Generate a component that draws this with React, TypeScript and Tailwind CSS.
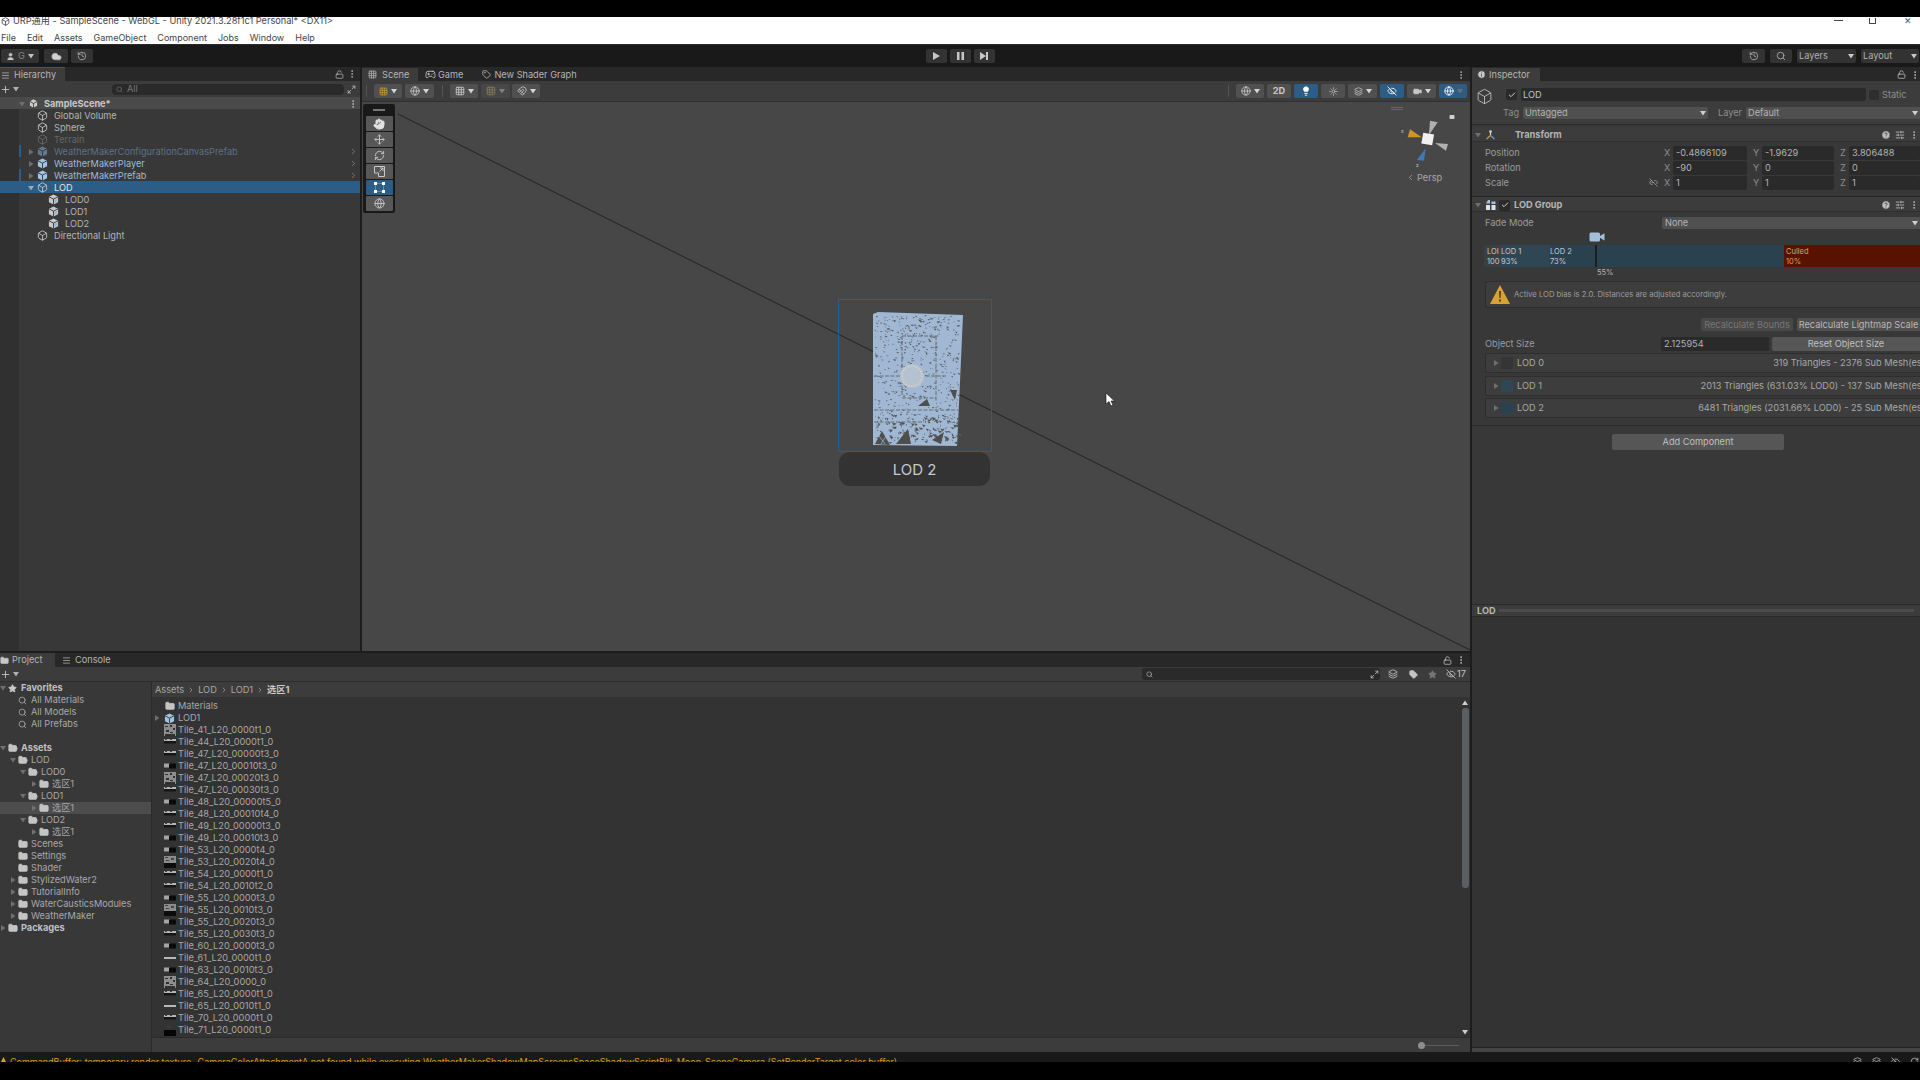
import type { ReactNode } from 'react';
import {
  Box, ChevronRight, CircleHelp, Cloud, EyeOff, Folder, FolderOpen, Globe, Grid3x3, Hand, History,
  Info, LockOpen, Maximize2, Menu, MoreVertical, Move, Plus, RefreshCw, Search, SlidersHorizontal, Star, Tag,
  Gamepad2, User, Link2Off, Check, Lightbulb, Video, Sun, Layers, Magnet,
} from 'lucide-react';

function Tri({ down = false, className = 'text-[#6f6f6f]' }: { down?: boolean; className?: string }) {
  return (
    <svg width="6" height="6" viewBox="0 0 6 6" className={`shrink-0 ${className}`}>
      <path d={down ? 'M0 1h6L3 5.5z' : 'M1 0l4.5 3L1 6z'} fill="currentColor" />
    </svg>
  );
}

function ToolBtn({ className = '', children }: { className?: string; children: ReactNode }) {
  return <div className={`h-[14px] flex items-center justify-center gap-[3px] rounded-[2px] ${className}`}>{children}</div>;
}

function PrefabIcon({ dim = false }: { dim?: boolean }) {
  return (
    <svg width="11" height="11" viewBox="0 0 12 12" className="shrink-0">
      <path d="M6 .5l5 2.5v6L6 11.5 1 9V3z" fill={dim ? '#64788a' : '#9fc4e6'} />
      <path d="M6 5.6v5.9M1 3l5 2.6L11 3" stroke="#333" strokeWidth="1" fill="none" />
    </svg>
  );
}

function MeshPrefabIcon() {
  return (
    <svg width="11" height="11" viewBox="0 0 12 12" className="shrink-0">
      <path d="M6 .5l5 2.5v6L6 11.5 1 9V3z" fill="#c9c9c9" />
      <path d="M6 5.6v5.9M1 3l5 2.6L11 3" stroke="#333" strokeWidth="1" fill="none" />
      <path d="M7 6.5l3-1.5v3L7 9.5z" fill="#8fb6da" />
    </svg>
  );
}

function TransformIcon() {
  return (
    <svg width="11" height="10" viewBox="0 0 11 10" className="ml-[4px] shrink-0">
      <path d="M5.500 5.500V1" stroke="#d8d8d8" strokeWidth="1.200" />
      <path d="M5.500 5.500L1.500 9" stroke="#d39a2e" strokeWidth="1.200" />
      <path d="M5.500 5.500L9.500 9" stroke="#6f9fd0" strokeWidth="1.200" />
      <circle cx="5.500" cy="1.500" r="1.300" fill="#d8d8d8" />
    </svg>
  );
}

function LodGroupIcon() {
  return (
    <svg width="10" height="10" viewBox="0 0 10 10" className="ml-[5px] shrink-0">
      <path d="M0 3.500L2 0h2v3.500zM5.500 1.500h4v2.500h-4z" fill="#a9c2dc" />
      <path d="M0 5h4v5H0zM5.500 5h4v5h-4z" fill="#dce4ec" />
    </svg>
  );
}

const hierarchyRows = [
  { name: 'Global Volume', pad: 'pl-[29px]', icon: 'go', text: 'text-[#b4b4b4]' },
  { name: 'Sphere', pad: 'pl-[29px]', icon: 'go', text: 'text-[#b4b4b4]' },
  { name: 'Terrain', pad: 'pl-[29px]', icon: 'off', text: 'text-[#666666]' },
  { name: 'WeatherMakerConfigurationCanvasPrefab', pad: 'pl-[29px]', icon: 'dimPrefab', text: 'text-[#5c7186]', arrow: true, more: true, mark: true },
  { name: 'WeatherMakerPlayer', pad: 'pl-[29px]', icon: 'prefab', text: 'text-[#9dbbd8]', arrow: true, more: true },
  { name: 'WeatherMakerPrefab', pad: 'pl-[29px]', icon: 'prefab', text: 'text-[#9dbbd8]', arrow: true, more: true, mark: true },
  { name: 'LOD', pad: 'pl-[29px]', icon: 'go', text: 'text-[#e4e4e4]', open: true, selected: true },
  { name: 'LOD0', pad: 'pl-[40px]', icon: 'mesh', text: 'text-[#b4b4b4]' },
  { name: 'LOD1', pad: 'pl-[40px]', icon: 'mesh', text: 'text-[#b4b4b4]' },
  { name: 'LOD2', pad: 'pl-[40px]', icon: 'mesh', text: 'text-[#b4b4b4]' },
  { name: 'Directional Light', pad: 'pl-[29px]', icon: 'go', text: 'text-[#b4b4b4]' },
];

function Hierarchy() {
  return (
    <div className="w-[360px] shrink-0 flex flex-col bg-[#383838]">
      <div className="h-[14px] bg-[#282828] flex items-center">
        <div className="w-[65px] h-full bg-[#3c3c3c] border-t border-[#2c5d87] flex items-center gap-1 pl-px pt-px text-[#b4b4b4]">
          <Menu size={9} />
          <span>Hierarchy</span>
        </div>
        <div className="ml-auto flex items-center gap-[3px] pr-[3px] text-[#b4b4b4]">
          <LockOpen size={9} />
          <MoreVertical size={10} />
        </div>
      </div>
      <div className="h-[16px] bg-[#3c3c3c] flex items-center text-[#c4c4c4]">
        <Plus size={11} />
        <Tri down className="text-[#b0b0b0] ml-[2px]" />
        <div className="ml-[93px] w-[232px] h-[11px] bg-[#2a2a2a] rounded-sm flex items-center gap-1 pl-1 text-[#777777]">
          <Search size={7} />
          <span>All</span>
        </div>
        <Maximize2 size={9} className="ml-[3px]" />
      </div>
      <div className="relative flex-1 flex flex-col">
        <div className="absolute left-0 top-0 bottom-0 w-[19px] bg-[#303030]" />
        <div className="relative h-3 bg-[#4a4a4a] flex items-center pl-[19px] pt-px font-bold text-[#c8c8c8]">
          <span className="w-[9px]"><Tri down /></span>
          <span className="w-3"><Box size={11} fill="#cccccc" className="text-[#444444]" /></span>
          <span className="ml-1">SampleScene*</span>
          <MoreVertical size={10} className="ml-auto mr-[2px] text-[#c4c4c4]" />
        </div>
        {hierarchyRows.map((r) => (
          <div key={r.name} className={`relative h-3 flex items-center pt-px ${r.pad} ${r.selected ? 'bg-[#2c5d87]' : ''}`}>
            {r.mark && <div className="absolute left-[19px] top-0 h-3 w-[2px] bg-[#2c5d87]" />}
            <span className="w-[9px] -ml-[1px]">{r.arrow && <Tri />}{r.open && <Tri down className="text-[#9aa9b5]" />}</span>
            <span className="w-3">
              {r.icon === 'go' && <Box size={11} className="text-[#c0c0c0]" />}
              {r.icon === 'off' && <Box size={11} className="text-[#666666]" />}
              {r.icon === 'prefab' && <PrefabIcon />}
              {r.icon === 'dimPrefab' && <PrefabIcon dim />}
              {r.icon === 'mesh' && <MeshPrefabIcon />}
            </span>
            <span className={`ml-[5px] ${r.text}`}>{r.name}</span>
            {r.more && <ChevronRight size={9} className="ml-auto mr-[2px] text-[#8a8a8a]" />}
          </div>
        ))}
      </div>
    </div>
  );
}

function buildSpecks() {
  let seed = 1337;
  const rnd = () => {
    seed = (seed * 16807) % 2147483647;
    return seed / 2147483647;
  };
  let d = '';
  for (let i = 0; i < 620; i++) {
    const zone = rnd();
    const bottom = zone < 0.28;
    const top = zone > 0.28 && zone < 0.5;
    const x = 2 + rnd() * 84;
    const y = bottom ? 104 + rnd() * 28 : top ? 5 + rnd() * 20 : 25 + rnd() * 80;
    const w = 0.8 + rnd() * (bottom ? 4 : 2.6);
    const h = 0.5 + rnd() * (bottom ? 2 : 0.9);
    d += `M${x.toFixed(1)} ${y.toFixed(1)}l${w.toFixed(1)} ${(h * 0.4).toFixed(1)}l${(-w * 0.5).toFixed(1)} ${h.toFixed(1)}z`;
  }
  return d;
}

const meshSpecks = buildSpecks();

function LodMesh() {
  return (
    <svg width="92" height="136" viewBox="0 0 92 136" className="absolute left-[510px] top-[208px]">
      <path d="M1 4l5-2 85 3-3 67-3 64L1 135z" fill="#a0b8d4" />
      <path d={meshSpecks} fill="#565656" />
      <path d="M30 26v60M30 26h36M64 26v66M30 88h34M48 66h26M2 66h26M2 100h84M2 112h50" stroke="#5f6468" strokeWidth="0.9" fill="none" strokeDasharray="4 1.5" />
      <path d="M3 134l7-13 8 14zM24 134l12-15 3 15zM60 130l12-8-3 12zM78 80l7 0-2 10zM46 96l9-7 3 7z" fill="#4e4e4e" />
      <path d="M4 122l9 12M18 120l-9 14" stroke="#a0b8d4" strokeWidth="0.7" />
      <circle cx="40" cy="66" r="12" fill="#b4c2d0" />
      <circle cx="40" cy="66" r="10" fill="none" stroke="#d0cec8" strokeWidth="2" strokeDasharray="1.5 1.5" />
    </svg>
  );
}

function Gizmo() {
  return (
    <svg width="64" height="72" viewBox="0 0 64 72" className="absolute left-[1043px] top-[8px] overflow-visible">
      <path d="M24 25l1-14.300 7.700 1.600z" fill="#b0b0b0" />
      <path d="M30 33l13 1-2 6.700z" fill="#b0b0b0" />
      <path d="M2.700 27.300L5 19.300l11.700 8z" fill="#cf9427" />
      <path d="M11.700 50l9-11.700L19 50.700z" fill="#3f78b4" />
      <rect x="17.200" y="23.500" width="11" height="11" transform="rotate(10 22.700 29)" fill="#f0f0f0" />
      <rect x="44.500" y="5" width="5" height="4" rx="1" fill="#d0d0d0" />
      <text x="-4" y="23" fontSize="5" fill="#cccccc">x</text>
      <text x="11" y="57" fontSize="5" fill="#cccccc">z</text>
    </svg>
  );
}

function ScaleToolIcon() {
  return (
    <svg width="11" height="11" viewBox="0 0 11 11" fill="none" stroke="#c8c8c8" strokeWidth="1">
      <path d="M.5.5h10v10H4.500V7H.5zM5.500 5.500L9 2M6 2h3v3" />
    </svg>
  );
}

function RectToolIcon() {
  return (
    <svg width="11" height="11" viewBox="0 0 11 11">
      <path d="M1.500 1.500h8v8h-8z" fill="none" stroke="#cfe0f0" strokeWidth="0.7" strokeDasharray="1 1" />
      <path d="M0 0h3v3H0zM8 0h3v3H8zM0 8h3v3H0zM8 8h3v3H8z" fill="#ffffff" />
    </svg>
  );
}

function SceneTools() {
  const tools = [
    <Hand key="hand" size={12} fill="#e2e2e2" className="text-[#e2e2e2]" />,
    <Move key="move" size={11} />,
    <RefreshCw key="rot" size={11} />,
    <ScaleToolIcon key="scale" />,
    <RectToolIcon key="rect" />,
    <Globe key="all" size={11} />,
  ];
  return (
    <div className="absolute left-[1px] top-[2px] w-[32px] h-[109px] bg-[#191919] rounded-[2px] flex flex-col items-center">
      <div className="h-[12px] flex items-center"><div className="w-3 h-[2px] border-y border-[#777777]" /></div>
      {tools.map((t, i) => (
        <div key={i} className={`w-[27px] h-[15px] mb-px flex items-center justify-center rounded-[1px] ${i === 4 ? 'bg-[#2c5d87] text-white' : 'bg-[#575757] text-[#c8c8c8]'}`}>
          {t}
        </div>
      ))}
    </div>
  );
}

function SceneView() {
  return (
    <div className="flex-1 flex flex-col min-w-0">
      <div className="h-[14px] bg-[#282828] flex items-center pt-px text-[#b4b4b4]">
        <div className="w-[56px] h-full bg-[#3c3c3c] flex items-center gap-[5px] pl-[6px]">
          <Grid3x3 size={9} />
          <span>Scene</span>
        </div>
        <Gamepad2 size={11} className="ml-[7px] text-[#c4c4c4]" />
        <span className="ml-[2px]">Game</span>
        <Tag size={9} className="ml-[19px] text-[#c4c4c4]" />
        <span className="ml-[3px]">New Shader Graph</span>
        <MoreVertical size={10} className="ml-auto mr-[4px]" />
      </div>
      <div className="h-[20px] bg-[#3c3c3c] flex items-center text-[#c8c8c8]">
        <div className="ml-[4px] w-px h-3 bg-[#555555]" />
        <ToolBtn className="ml-[7px] w-[28px] bg-[#505050]"><Grid3x3 size={9} className="text-[#c99a4b]" /><Tri down className="text-[#d4d4d4]" /></ToolBtn>
        <ToolBtn className="ml-[3px] w-[29px] bg-[#505050]"><Globe size={10} /><Tri down className="text-[#d4d4d4]" /></ToolBtn>
        <div className="ml-[8px] w-px h-3 bg-[#555555]" />
        <ToolBtn className="ml-[7px] w-[28px] bg-[#505050]"><Grid3x3 size={10} /><Tri down className="text-[#d4d4d4]" /></ToolBtn>
        <ToolBtn className="ml-[3px] w-[29px] bg-[#474747]"><Grid3x3 size={10} className="text-[#8a7a5a]" /><Tri down className="text-[#808080]" /></ToolBtn>
        <ToolBtn className="ml-[2px] w-[28px] bg-[#505050]"><Magnet size={10} /><Tri down className="text-[#d4d4d4]" /></ToolBtn>
        <div className="ml-auto flex items-center gap-[3px] pr-[3px]">
          <div className="w-px h-3 bg-[#555555] mr-[4px]" />
          <ToolBtn className="w-[28px] bg-[#505050]"><Globe size={10} /><Tri down className="text-[#d4d4d4]" /></ToolBtn>
          <ToolBtn className="w-[24px] bg-[#505050] font-bold">2D</ToolBtn>
          <ToolBtn className="w-[24px] bg-[#2c5d87]"><Lightbulb size={10} fill="#ffffff" className="text-white" /></ToolBtn>
          <ToolBtn className="w-[24px] bg-[#505050]"><Sun size={9} /></ToolBtn>
          <ToolBtn className="w-[29px] bg-[#505050]"><Layers size={9} /><Tri down className="text-[#d4d4d4]" /></ToolBtn>
          <ToolBtn className="w-[24px] bg-[#2c5d87] text-white"><EyeOff size={10} /></ToolBtn>
          <ToolBtn className="w-[29px] bg-[#505050]"><Video size={9} fill="#c8c8c8" /><Tri down className="text-[#d4d4d4]" /></ToolBtn>
          <ToolBtn className="w-[28px] bg-[#2c5d87] text-white"><Globe size={10} /><Tri down /></ToolBtn>
        </div>
      </div>
      <div className="relative flex-1 bg-[#474747] overflow-hidden border-t border-[#303030]">
        <svg className="absolute inset-0 w-full h-full">
          <line x1="36" y1="12" x2="1108" y2="548" stroke="#222222" strokeWidth="1" />
        </svg>
        <SceneTools />
        <div className="absolute left-[476px] top-[197px] w-[154px] h-[153px] border border-[#2c5d87]" />
        <LodMesh />
        <div className="absolute left-[477px] top-[350px] w-[151px] h-[34px] rounded-[11px] bg-[#333333] flex items-center justify-center text-[15px] text-[#c8c8c8]">LOD 2</div>
        <svg width="10" height="14" viewBox="0 0 10 14" className="absolute left-[743px] top-[291px]">
          <path d="M1 0v11l3-2.500 2 4.500 2-1-2-4h3.500z" fill="#ffffff" stroke="#111111" strokeWidth="0.6" />
        </svg>
        <Gizmo />
        <div className="absolute left-[1044px] top-[71px] flex items-center gap-[2px] text-[#a8a8a8]">
          <ChevronRight size={9} className="rotate-180" />
          <span>Persp</span>
        </div>
        <div className="absolute left-[1029px] top-[5px] w-3 h-[3px] border-y border-[#666666]" />
      </div>
    </div>
  );
}

const treeRows = [
  { name: 'All Materials', pad: 'pl-[10px]', icon: 'search' },
  { name: 'All Models', pad: 'pl-[10px]', icon: 'search' },
  { name: 'All Prefabs', pad: 'pl-[10px]', icon: 'search' },
  { name: '', pad: '', icon: '' },
  { name: 'Assets', pad: 'pl-0', icon: 'open', arrow: 'down', bold: true },
  { name: 'LOD', pad: 'pl-[10px]', icon: 'open', arrow: 'down' },
  { name: 'LOD0', pad: 'pl-[20px]', icon: 'open', arrow: 'down' },
  { name: '选区1', pad: 'pl-[31px]', icon: 'folder', arrow: 'right' },
  { name: 'LOD1', pad: 'pl-[20px]', icon: 'open', arrow: 'down' },
  { name: '选区1', pad: 'pl-[31px]', icon: 'folder', arrow: 'right', selected: true },
  { name: 'LOD2', pad: 'pl-[20px]', icon: 'open', arrow: 'down' },
  { name: '选区1', pad: 'pl-[31px]', icon: 'folder', arrow: 'right' },
  { name: 'Scenes', pad: 'pl-[10px]', icon: 'folder' },
  { name: 'Settings', pad: 'pl-[10px]', icon: 'folder' },
  { name: 'Shader', pad: 'pl-[10px]', icon: 'folder' },
  { name: 'StylizedWater2', pad: 'pl-[10px]', icon: 'folder', arrow: 'right' },
  { name: 'TutorialInfo', pad: 'pl-[10px]', icon: 'folder', arrow: 'right' },
  { name: 'WaterCausticsModules', pad: 'pl-[10px]', icon: 'folder', arrow: 'right' },
  { name: 'WeatherMaker', pad: 'pl-[10px]', icon: 'folder', arrow: 'right' },
  { name: 'Packages', pad: 'pl-0', icon: 'folder', arrow: 'right', bold: true },
];

const tiles: [string, number][] = [
  ['Tile_41_L20_0000t1_0', 0], ['Tile_44_L20_0000t1_0', 1], ['Tile_47_L20_00000t3_0', 1], ['Tile_47_L20_00010t3_0', 2],
  ['Tile_47_L20_00020t3_0', 0], ['Tile_47_L20_00030t3_0', 1], ['Tile_48_L20_00000t5_0', 2], ['Tile_48_L20_00010t4_0', 1],
  ['Tile_49_L20_00000t3_0', 1], ['Tile_49_L20_00010t3_0', 2], ['Tile_53_L20_0000t4_0', 2], ['Tile_53_L20_0020t4_0', 3],
  ['Tile_54_L20_0000t1_0', 1], ['Tile_54_L20_0010t2_0', 1], ['Tile_55_L20_0000t3_0', 2], ['Tile_55_L20_0010t3_0', 3],
  ['Tile_55_L20_0020t3_0', 2], ['Tile_55_L20_0030t3_0', 1], ['Tile_60_L20_0000t3_0', 2], ['Tile_61_L20_0000t1_0', 4],
  ['Tile_63_L20_0010t3_0', 2], ['Tile_64_L20_0000_0', 0], ['Tile_65_L20_0000t1_0', 1], ['Tile_65_L20_0010t1_0', 4],
  ['Tile_70_L20_0000t1_0', 1], ['Tile_71_L20_0000t1_0', 5],
];

function Thumb({ kind }: { kind: number }) {
  return (
    <svg width="12" height="12" viewBox="0 0 12 12" className="shrink-0">
      {kind === 0 && (
        <>
          <rect width="12" height="12" fill="#8e8e8e" />
          <path d="M1 2h3v1H1zM6 1h2v2H6zM9 4h2v2H9zM2 6h3v2H2zM6 8h3v1H6zM1 10h10v2H1z" fill="#303030" />
        </>
      )}
      {kind === 1 && (
        <>
          <rect y="3" width="12" height="2" fill="#b5b5b5" />
          <rect y="5" width="12" height="2.500" fill="#161616" />
          <path d="M1 3h2v1H1zM6 3h2v1H6z" fill="#444444" />
        </>
      )}
      {kind === 2 && (
        <>
          <rect y="3.500" width="6" height="4" fill="#a5a5a5" />
          <rect x="5" y="3.500" width="7" height="5" fill="#0a0a0a" />
        </>
      )}
      {kind === 3 && (
        <>
          <rect width="12" height="7" fill="#8c8c8c" />
          <path d="M1 1h3v1H1zM7 2h3v2H7zM2 4h3v1H2z" fill="#444444" />
          <rect y="7" width="12" height="5" fill="#0c0c0c" />
        </>
      )}
      {kind === 4 && <rect y="5" width="12" height="2" fill="#b8b8b8" />}
      {kind === 5 && (
        <>
          <rect x="3" y="1" width="4" height="3" fill="#3a3a3a" />
          <rect y="6" width="12" height="6" fill="#060606" />
        </>
      )}
    </svg>
  );
}

function ProjectPanel() {
  return (
    <div className="h-[401px] shrink-0 flex flex-col bg-[#383838] border-t-2 border-[#1d1d1d]">
      <div className="h-[14px] bg-[#282828] flex items-center text-[#b4b4b4]">
        <div className="w-[55px] h-full bg-[#3c3c3c] flex items-center gap-[3px]">
          <Folder size={9} fill="#c8c8c8" />
          <span>Project</span>
        </div>
        <Menu size={9} className="ml-[7px]" />
        <span className="ml-1">Console</span>
        <div className="ml-auto flex items-center gap-[4px] pr-[4px] text-[#c4c4c4]">
          <LockOpen size={9} />
          <MoreVertical size={10} />
        </div>
      </div>
      <div className="h-[15px] bg-[#3c3c3c] flex items-center text-[#c4c4c4] border-b border-[#2c2c2c]">
        <Plus size={11} />
        <Tri down className="text-[#b0b0b0] ml-[2px]" />
        <div className="ml-auto w-[238px] h-[12px] bg-[#2a2a2a] rounded-[3px] flex items-center pl-[4px] pr-px">
          <Search size={7} />
          <Maximize2 size={9} className="ml-auto" />
        </div>
        <Layers size={10} className="ml-[8px]" />
        <Tag size={9} fill="#c4c4c4" className="ml-[11px]" />
        <Star size={9} fill="#777777" className="ml-[10px] text-[#777777]" />
        <EyeOff size={10} className="ml-[9px]" />
        <span className="mr-[4px] ml-px">17</span>
      </div>
      <div className="flex-1 flex min-h-0">
        <div className="w-[152px] shrink-0 border-r border-[#2a2a2a]">
          <div className="h-3 flex items-center pl-0 font-bold text-[#c0c0c0]">
            <span className="w-2"><Tri down /></span>
            <span className="w-3"><Star size={9} fill="#c8c8c8" className="text-[#c8c8c8]" /></span>
            <span className="ml-px">Favorites</span>
          </div>
          {treeRows.map((r, i) => (
            <div key={i} className={`h-3 flex items-center ${r.pad} ${r.selected ? 'bg-[#4d4d4d]' : ''} ${r.bold ? 'font-bold text-[#c0c0c0]' : 'text-[#a8a8a8]'}`}>
              <span className="w-2">
                {r.arrow === 'down' && <Tri down />}
                {r.arrow === 'right' && <Tri />}
              </span>
              <span className="w-3">
                {r.icon === 'search' && <Search size={9} className="text-[#b0b0b0]" />}
                {r.icon === 'open' && <FolderOpen size={10} fill="#c4c4c4" className="text-[#c4c4c4]" />}
                {r.icon === 'folder' && <Folder size={10} fill="#c4c4c4" className="text-[#c4c4c4]" />}
              </span>
              <span className="ml-px">{r.name}</span>
            </div>
          ))}
        </div>
        <div className="flex-1 flex flex-col min-w-0">
          <div className="h-4 bg-[#3c3c3c] flex items-center gap-[3px] pl-[3px] text-[#a8a8a8] border-b border-[#333333]">
            <span>Assets</span><ChevronRight size={8} /><span>LOD</span><ChevronRight size={8} /><span>LOD1</span><ChevronRight size={8} />
            <span className="font-bold text-[#c8c8c8]">选区1</span>
          </div>
          <div className="relative flex-1 bg-[#333333] overflow-hidden pt-[2px]">
            <div className="h-3 flex items-center pl-[12px] text-[#a8a8a8]">
              <Folder size={10} fill="#c4c4c4" className="text-[#c4c4c4] w-3 shrink-0" />
              <span className="ml-[2px]">Materials</span>
            </div>
            <div className="h-3 flex items-center pl-[2px] text-[#a8a8a8]">
              <span className="w-[10px]"><Tri /></span>
              <PrefabIcon />
              <span className="ml-[3px]">LOD1</span>
            </div>
            {tiles.map(([name, kind]) => (
              <div key={name} className="h-3 flex items-center pl-[12px] text-[#a8a8a8]">
                <Thumb kind={kind} />
                <span className="ml-[2px]">{name}</span>
              </div>
            ))}
            <div className="absolute right-[1px] top-[2px] bottom-0 w-2 flex flex-col items-center">
              <Tri down className="text-[#d0d0d0] rotate-180" />
              <div className="mt-[2px] w-[7px] h-[180px] rounded-[3px] bg-[#5a5f63]" />
              <div className="mt-auto mb-[2px]"><Tri down className="text-[#d0d0d0]" /></div>
            </div>
          </div>
          <div className="h-[15px] bg-[#3c3c3c] border-t border-[#2a2a2a] flex items-center justify-end pr-[11px]">
            <div className="relative w-[38px] h-px bg-[#5c5c5c]">
              <div className="absolute -left-[3px] -top-[3px] w-[7px] h-[7px] rounded-full bg-[#8e8e8e]" />
            </div>
          </div>
        </div>
      </div>
    </div>
  );
}

function VecField({ axis, value }: { axis: string; value: string }) {
  return (
    <div className="flex items-center">
      <span className="w-[9px] text-[#8e8e8e]">{axis}</span>
      <div className="flex-1 h-[14px] bg-[#2a2a2a] rounded-[2px] flex items-center pl-[3px] text-[#b4b4b4]">{value}</div>
    </div>
  );
}

function VecRow({ label, vals, link = false }: { label: string; vals: string[]; link?: boolean }) {
  return (
    <div className="h-[15px] flex items-center pl-[13px] text-[#9c9c9c]">
      <span className="flex-1">{label}</span>
      {link && <Link2Off size={9} className="mr-[6px] text-[#a8a8a8]" />}
      <div className="w-[256px] grid grid-cols-[83px_87px_86px]">
        <VecField axis="X" value={vals[0]} />
        <div className="pl-[6px]"><VecField axis="Y" value={vals[1]} /></div>
        <div className="pl-[6px]"><VecField axis="Z" value={vals[2]} /></div>
      </div>
    </div>
  );
}

function HeaderIcons() {
  return (
    <div className="ml-auto flex items-center gap-[4px] text-[#c0c0c0]">
      <CircleHelp size={10} fill="#c0c0c0" className="text-[#383838]" />
      <SlidersHorizontal size={10} />
      <MoreVertical size={10} />
    </div>
  );
}

function LodRow({ name, info, swatch }: { name: string; info: string; swatch: string }) {
  return (
    <div className="h-[20px] ml-[13px] mb-[2.5px] flex items-center rounded-l-[2px] border border-r-0 border-[#2e2e2e] bg-[#3d3d3d] pl-[7px] text-[#a8a8a8]">
      <Tri />
      <div className={`ml-[2px] w-3 h-3 ${swatch}`} />
      <span className="ml-[4px] flex-1">{name}</span>
      <span className="whitespace-nowrap -mr-[5px]">{info}</span>
    </div>
  );
}

function Inspector() {
  return (
    <div className="flex-1 flex flex-col min-w-0 bg-[#383838] overflow-hidden">
      <div className="h-[14px] shrink-0 bg-[#282828] flex items-center pt-px text-[#b4b4b4]">
        <div className="w-[68px] h-full bg-[#3c3c3c] flex items-center gap-[3px] pl-[5px]">
          <Info size={9} fill="#c8c8c8" className="text-[#3c3c3c]" />
          <span>Inspector</span>
        </div>
        <div className="ml-auto flex items-center gap-[4px] text-[#c4c4c4]">
          <LockOpen size={9} />
          <MoreVertical size={10} />
        </div>
      </div>
      <div className="h-[44px] shrink-0 bg-[#3c3c3c] border-b border-[#2a2a2a] relative">
        <Box size={17} strokeWidth={1.2} className="absolute left-[4px] top-[7px] text-[#c4c4c4]" />
        <div className="flex items-center h-[13px] mt-[7px] pl-[34px]">
          <div className="w-[11px] h-[11px] bg-[#2a2a2a] rounded-[2px] flex items-center justify-center"><Check size={8} className="text-[#d0d0d0]" strokeWidth={3} /></div>
          <div className="ml-[4px] w-[345px] h-[13px] bg-[#2a2a2a] rounded-[2px] flex items-center pl-[2px] text-[#c4c4c4]">LOD</div>
          <div className="ml-[3px] w-[10px] h-[10px] bg-[#2e2e2e] rounded-[2px]" />
          <span className="ml-[3px] text-[#8e8e8e] whitespace-nowrap">Static</span>
        </div>
        <div className="flex items-center h-[12px] mt-[6px] pl-[31px] text-[#8e8e8e]">
          <span className="w-[20px]">Tag</span>
          <div className="w-[185px] h-[12px] bg-[#505050] rounded-[2px] flex items-center pl-[2px] pr-[2px] text-[#b4b4b4]">
            <span>Untagged</span>
            <span className="ml-auto"><Tri down className="text-[#d0d0d0]" /></span>
          </div>
          <span className="ml-[10px] w-[28px]">Layer</span>
          <div className="flex-1 h-[12px] bg-[#505050] rounded-l-[2px] flex items-center pl-[2px] pr-[2px] text-[#b4b4b4]">
            <span>Default</span>
            <span className="ml-auto"><Tri down className="text-[#d0d0d0]" /></span>
          </div>
        </div>
      </div>
      <div className="h-[15px] shrink-0 bg-[#3c3c3c] border-b border-[#2f2f2f] flex items-center pl-[3px] pr-px pt-[2px] text-[#b4b4b4] font-bold mt-[2px]">
        <Tri down />
        <TransformIcon />
        <span className="ml-[19px]">Transform</span>
        <HeaderIcons />
      </div>
      <div className="pt-[3px] pb-[6px] shrink-0 border-b border-[#252525]">
        <VecRow label="Position" vals={['-0.4866109', '-1.9629', '3.806488']} />
        <VecRow label="Rotation" vals={['-90', '0', '0']} />
        <VecRow label="Scale" vals={['1', '1', '1']} link />
      </div>
      <div className="h-[15px] shrink-0 bg-[#3c3c3c] border-b border-[#2f2f2f] flex items-center pl-[3px] pr-px pt-[2px] text-[#b4b4b4] font-bold">
        <Tri down />
        <LodGroupIcon />
        <div className="ml-[3px] w-[11px] h-[11px] bg-[#2a2a2a] rounded-[2px] flex items-center justify-center"><Check size={8} className="text-[#d0d0d0]" strokeWidth={3} /></div>
        <span className="ml-[4px]">LOD Group</span>
        <HeaderIcons />
      </div>
      <div className="h-[12px] mt-[5px] shrink-0 flex items-center pl-[13px] text-[#9c9c9c]">
        <span className="w-[177px]">Fade Mode</span>
        <div className="flex-1 h-[12px] bg-[#505050] rounded-l-[2px] flex items-center pl-[3px] pr-[2px] text-[#b4b4b4]">
          <span>None</span>
          <span className="ml-auto"><Tri down className="text-[#d0d0d0]" /></span>
        </div>
      </div>
      <div className="h-[13px] mt-px shrink-0 pl-[116px] flex items-center text-[#a3bfdc]">
        <Video size={18} fill="#a3bfdc" strokeWidth={0} />
      </div>
      <div className="h-[22px] mt-[2px] ml-[12px] shrink-0 flex text-[7.5px] leading-[10px] text-[#c8c8c8] whitespace-nowrap">
        <div className="w-[16px] bg-[#3a3f42] pl-[3px] pt-[2px] overflow-hidden">LOI<br />100</div>
        <div className="w-[49px] bg-[#2f4754] pl-px pt-[2px]">LOD 1<br />93%</div>
        <div className="w-[48px] bg-[#2a4250] pl-px pt-[2px] border-r-2 border-[#1d1d1d]">LOD 2<br />73%</div>
        <div className="w-[187px] bg-[#2a4250]" />
        <div className="flex-1 bg-[#5a1200] pl-[2px] pt-[2px] text-[#d2a36f]">Culled<br />10%</div>
      </div>
      <div className="h-[11px] shrink-0 pl-[125px] text-[7.5px] leading-[11px] text-[#b4b4b4]">55%</div>
      <div className="h-[27px] mt-[3px] ml-[13px] shrink-0 flex items-center rounded-l-[3px] border border-r-0 border-[#2e2e2e] bg-[#3d3d3d] pl-[4px] text-[7.7px] text-[#9c9c9c]">
        <svg width="20" height="19" viewBox="0 0 20 19">
          <path d="M10 0l10 19H0z" fill="#d9a332" />
          <path d="M9 6h2l-.4 7h-1.200zM9 14.500h2v2H9z" fill="#5a3a10" />
        </svg>
        <span className="ml-[4px]">Active LOD bias is 2.0. Distances are adjusted accordingly.</span>
      </div>
      <div className="h-[13px] mt-[10px] shrink-0 flex justify-end gap-[4px]">
        <div className="w-[92px] bg-[#484848] rounded-[2px] flex items-center justify-center text-[#777777]">Recalculate Bounds</div>
        <div className="w-[123px] bg-[#505050] rounded-l-[2px] flex items-center justify-center text-[#b8b8b8] whitespace-nowrap">Recalculate Lightmap Scale</div>
      </div>
      <div className="h-[14px] mt-[6px] shrink-0 flex items-center pl-[13px] text-[#9c9c9c]">
        <span className="w-[176px]">Object Size</span>
        <div className="w-[108px] h-[14px] bg-[#2a2a2a] rounded-[2px] flex items-center pl-[3px] text-[#b4b4b4]">2.125954</div>
        <div className="ml-[3px] flex-1 h-[14px] bg-[#565656] rounded-l-[2px] flex items-center justify-center text-[#c0c0c0]">Reset Object Size</div>
      </div>
      <div className="mt-[2px] shrink-0">
        <LodRow name="LOD 0" info="319 Triangles  - 2376 Sub Mesh(es)" swatch="bg-[#353535]" />
        <LodRow name="LOD 1" info="2013 Triangles (631.03% LOD0) - 137 Sub Mesh(es)" swatch="bg-[#2f4754]" />
        <LodRow name="LOD 2" info="6481 Triangles (2031.66% LOD0) - 25 Sub Mesh(es)" swatch="bg-[#2a4250]" />
      </div>
      <div className="h-px mt-[4px] shrink-0 bg-[#2a2a2a]" />
      <div className="mt-[8px] shrink-0 flex justify-center pl-[4px]">
        <div className="w-[172px] h-[16px] bg-[#565656] rounded-[2px] flex items-center justify-center text-[#c0c0c0]">Add Component</div>
      </div>
      <div className="flex-1 min-h-0" />
      <div className="h-[13px] shrink-0 bg-[#3c3c3c] border-y border-[#2a2a2a] flex items-center pl-[5px] pr-[6px] text-[#b4b4b4] font-bold">
        <span>LOD</span>
        <div className="ml-[3px] flex-1 h-[3px] bg-[#4c4c4c]" />
      </div>
      <div className="h-[430px] shrink-0 bg-[#333333]" />
      <div className="h-[5px] shrink-0 bg-[#454545] border-t border-[#222222]" />
    </div>
  );
}

const menus = ['File', 'Edit', 'Assets', 'GameObject', 'Component', 'Jobs', 'Window', 'Help'];

export default function App() {
  return (
    <div className="w-[1920px] h-[1080px] overflow-hidden bg-black flex flex-col font-['Inter','Noto_Sans_CJK_SC',sans-serif] text-[9.2px] leading-none">
      <div className="h-[17px] shrink-0 bg-black" />
      <div className="h-[27px] shrink-0 bg-white text-[#444444] overflow-hidden relative">
        <div className="h-[8px] flex items-center gap-[3px] pl-px overflow-visible whitespace-nowrap">
          <Box size={9} className="text-[#333333]" />
          <span className="text-[9.2px]">URP通用 - SampleScene - WebGL - Unity 2021.3.28f1c1 Personal* &lt;DX11&gt;</span>
        </div>
        <div className="absolute right-0 top-0 h-[7px] flex items-center text-[#555555]">
          <div className="w-[9px] h-px bg-[#444444] mr-[26px]" />
          <div className="w-[7px] h-[6px] border-x border-b border-[#444444] mr-[28px]" />
          <div className="text-[9px] mr-[8px]">✕</div>
        </div>
        <div className="h-[19px] flex items-center gap-[11px] pl-px text-[9px] pt-[5px]">
          {menus.map((m) => <span key={m}>{m}</span>)}
        </div>
      </div>
      <div className="h-[23px] shrink-0 bg-[#191919] flex items-center text-[#b0b0b0] border-t border-[#2a2a2a]">
        <div className="flex-1 flex items-center">
          <ToolBtn className="ml-px w-[38px] bg-[#333333]">
            <User size={9} fill="#c8c8c8" />
            <span className="text-[#888888]">G</span>
            <Tri down className="text-[#c0c0c0]" />
          </ToolBtn>
          <ToolBtn className="ml-[5px] w-[24px] bg-[#333333]"><Cloud size={11} fill="#d0d0d0" /></ToolBtn>
          <ToolBtn className="ml-[3px] w-[22px] bg-[#333333]"><History size={10} /></ToolBtn>
        </div>
        <div className="flex items-center gap-[3px]">
          <ToolBtn className="w-[21px] bg-[#333333]"><svg width="7" height="8" viewBox="0 0 7 8"><path d="M0 0l7 4-7 4z" fill="#c8c8c8" /></svg></ToolBtn>
          <ToolBtn className="w-[21px] bg-[#333333]"><svg width="7" height="8" viewBox="0 0 7 8"><path d="M0 0h2.500v8H0zM4.500 0H7v8H4.500z" fill="#c8c8c8" /></svg></ToolBtn>
          <ToolBtn className="w-[21px] bg-[#333333]"><svg width="8" height="8" viewBox="0 0 8 8"><path d="M0 0l6 4-6 4zM6 0h2v8H6z" fill="#c8c8c8" /></svg></ToolBtn>
        </div>
        <div className="flex-1 flex items-center justify-end">
          <ToolBtn className="w-[23px] bg-[#333333]"><History size={10} /></ToolBtn>
          <ToolBtn className="ml-[5px] w-[22px] bg-[#333333]"><Search size={10} /></ToolBtn>
          <ToolBtn className="ml-[5px] w-[59px] bg-[#333333] !justify-between px-[2px]"><span>Layers</span><Tri down className="text-[#c8c8c8]" /></ToolBtn>
          <ToolBtn className="ml-[5px] w-[58px] bg-[#333333] !justify-between px-[2px] mr-px"><span>Layout</span><Tri down className="text-[#c8c8c8]" /></ToolBtn>
        </div>
      </div>
      <div className="h-[985px] shrink-0 flex bg-[#1d1d1d]">
        <div className="w-[1470px] shrink-0 flex flex-col">
          <div className="flex-1 min-h-0 flex">
            <Hierarchy />
            <div className="w-[2px] bg-[#1d1d1d] shrink-0" />
            <SceneView />
          </div>
          <ProjectPanel />
        </div>
        <div className="w-[2px] shrink-0 bg-[#1d1d1d]" />
        <Inspector />
      </div>
      <div className="h-[10px] shrink-0 bg-[#191919] overflow-hidden flex items-start pt-[5px] text-[9px] text-[#d79a1a] whitespace-nowrap relative">
        <svg width="7" height="7" viewBox="0 0 7 7" className="mr-[3px]"><path d="M3.500 0L7 7H0z" fill="#d9a332" /></svg>
        <span>CommandBuffer: temporary render texture _CameraColorAttachmentA not found while executing WeatherMakerShadowMapScreensSpaceShadowScriptBlit_Moon_SceneCamera (SetRenderTarget color buffer)</span>
        <div className="absolute right-[1px] top-[5px] flex gap-[10px] text-[#c0c0c0]">
          <Layers size={9} /><Layers size={9} /><EyeOff size={9} /><RefreshCw size={9} />
        </div>
      </div>
      <div className="flex-1 bg-black" />
    </div>
  );
}
